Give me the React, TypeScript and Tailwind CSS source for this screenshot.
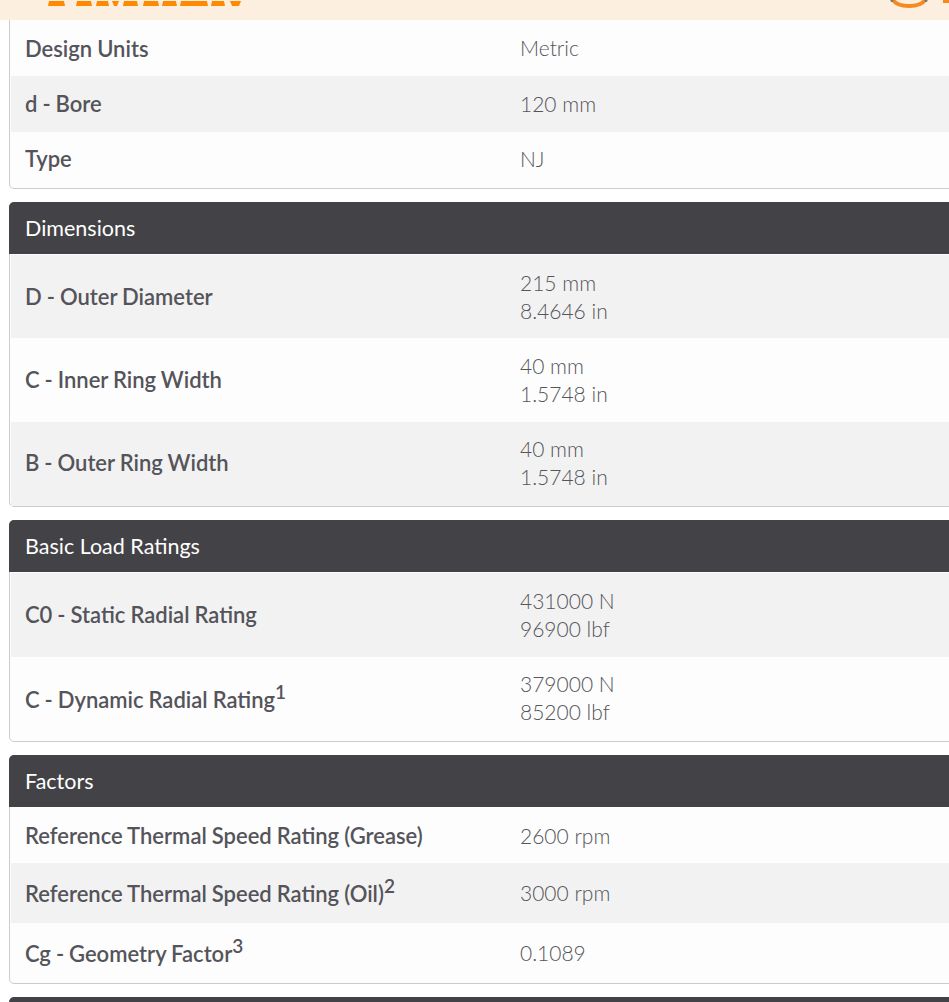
import React from 'react';

// nudge / valueNudge make up for the fractional row offsets of the original page
type Row = { label: string; sup?: string; values: string[]; h: string; nudge?: string; valueNudge?: string };

const panels: { title?: string; rows: Row[] }[] = [
  {
    rows: [
      { label: 'Design Units', values: ['Metric'], h: 'h-[56px]' },
      { label: 'd - Bore', values: ['120 mm'], h: 'h-[56px]', nudge: 'pb-[2px]' },
      { label: 'Type', values: ['NJ'], h: 'h-[56px]', nudge: 'pb-[4px]', valueNudge: 'pb-[2px]' },
    ],
  },
  {
    title: 'Dimensions',
    rows: [
      { label: 'D - Outer Diameter', values: ['215 mm', '8.4646 in'], h: 'h-[84px]' },
      { label: 'C - Inner Ring Width', values: ['40 mm', '1.5748 in'], h: 'h-[84px]', nudge: 'pb-[2px]' },
      { label: 'B - Outer Ring Width', values: ['40 mm', '1.5748 in'], h: 'h-[84px]', nudge: 'pb-[4px]', valueNudge: 'pb-[2px]' },
    ],
  },
  {
    title: 'Basic Load Ratings',
    rows: [
      { label: 'C0 - Static Radial Rating', values: ['431000 N', '96900 lbf'], h: 'h-[85px]', nudge: 'pb-[2px]' },
      { label: 'C - Dynamic Radial Rating', sup: '1', values: ['379000 N', '85200 lbf'], h: 'h-[84px]', nudge: 'pt-[2px]', valueNudge: 'pb-[2px]' },
    ],
  },
  {
    title: 'Factors',
    rows: [
      { label: 'Reference Thermal Speed Rating (Grease)', values: ['2600 rpm'], h: 'h-[56px]' },
      { label: 'Reference Thermal Speed Rating (Oil)', sup: '2', values: ['3000 rpm'], h: 'h-[60px]', nudge: 'pt-[2px]' },
      { label: 'Cg - Geometry Factor', sup: '3', values: ['0.1089'], h: 'h-[60px]', nudge: 'pt-[2px]' },
    ],
  },
];

// the first and last panel stripe the middle row, the other two start on the first row
function stripe(title: string | undefined, i: number) {
  if (title === 'Factors' || !title) return i === 1;
  return i % 2 === 0;
}

function Panel({ title, rows, first }: { title?: string; rows: Row[]; first?: boolean }) {
  return (
    <div className={`w-[1100px] ${first ? 'rounded-b-[5px] border-t-0' : 'rounded-[5px]'} border border-[#cccccc] bg-[#fdfdfd]`}>
      {title && (
        <div className="-mx-px -mt-px flex h-[52px] items-center rounded-t-[5px] bg-[#434247] pl-4 text-[21.5px] text-white">
          {title}
        </div>
      )}
      <div className="pl-px">
        {rows.map((row, i) => (
          <div
            key={row.label}
            className={`flex items-center ${row.h} ${title && i === 0 ? 'border-t border-[#fdfdfd]' : ''} ${stripe(title, i) ? 'bg-[#f2f2f2]' : ''}`}
          >
            <div className={`w-[509px] shrink-0 pl-[14px] text-[22px] font-semibold text-[#54545a] [word-spacing:-0.5px] ${row.nudge ?? ''}`}>
              {row.label}
              {row.sup && <sup className="relative top-[-1px] align-super text-[19px] leading-none font-semibold">{row.sup}</sup>}
            </div>
            <div className={`text-[21px] leading-[28px] font-light text-[#55555b] ${row.valueNudge ?? ''}`}>
              {row.values.map((v) => (
                <div key={v}>{v}</div>
              ))}
            </div>
          </div>
        ))}
      </div>
    </div>
  );
}

export default function App() {
  return (
    <div className="h-[1002px] w-[949px] overflow-hidden bg-white" style={{ fontFamily: 'Lato, "Open Sans", sans-serif' }}>
      {/* header strip, logo is cut off by the top of the window */}
      <div className="relative h-5 bg-[#fdefdf]">
        <svg className="absolute top-0 left-0" width="260" height="8" viewBox="0 0 260 8">
          <g fill="#ff8a00">
            <path d="M49 1H64L65 6H48Z" />
            <path d="M77 1H91L92 6H76Z" />
            <path d="M97 1H108L109 6H96Z" />
            <path d="M112 1H119L117 6H114Z" />
            <path d="M124 1H137L138 6H123Z" />
            <path d="M144 1H158L159 6H143Z" />
            <path d="M163 1H176L177 6H162Z" />
            <path d="M181 1H207L208 6H180Z" />
            <path d="M212 1H224L225 6H211Z" />
            <path d="M230 1H241L239 6H232Z" />
          </g>
        </svg>
        <svg className="absolute top-0 left-[885px]" width="64" height="12" viewBox="0 0 64 12">
          <path d="M8 0 C 13 8, 35 8, 40 0" fill="none" stroke="#f58a1f" strokeWidth="4" />
          <circle cx="7" cy="0.5" r="1.5" fill="#77777c" />
          <circle cx="41" cy="0.5" r="1.5" fill="#77777c" />
          <rect x="58" y="0" width="6" height="3" fill="#f58a1f" />
        </svg>
      </div>
      <div className="ml-[9px] flex flex-col gap-[13px]">
        {panels.map((p, i) => (
          <Panel key={i} title={p.title} rows={p.rows} first={i === 0} />
        ))}
        <div className="h-[20px] w-[1100px] rounded-t-[5px] bg-[#434247]" />
      </div>
    </div>
  );
}
